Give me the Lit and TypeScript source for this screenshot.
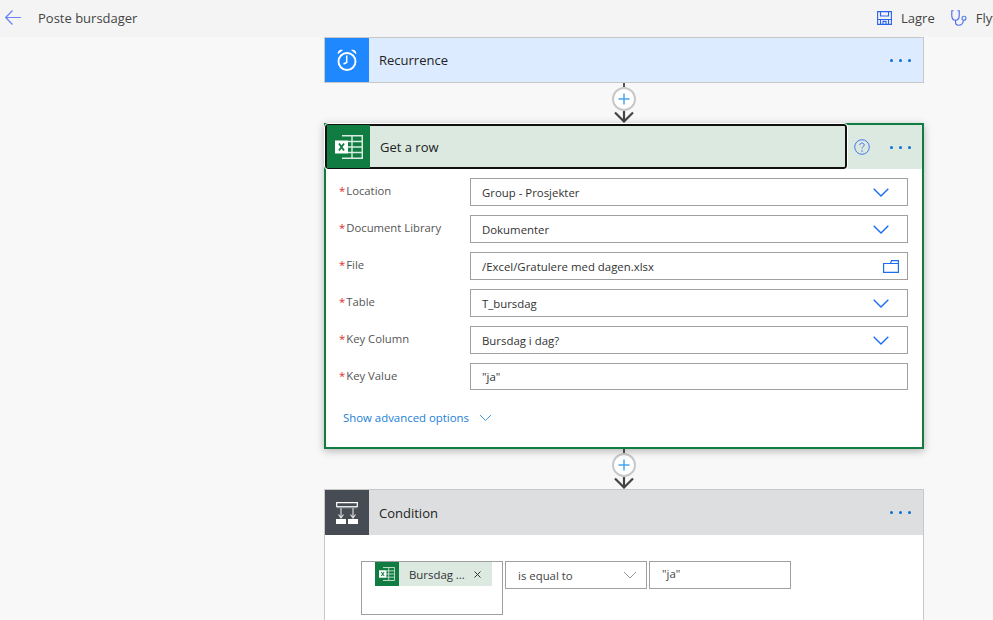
import { LitElement, html, css } from "lit";
import { customElement } from "lit/decorators.js";

const chevron = html`<svg class="chev" width="16" height="9" viewBox="0 0 16 9"><path d="M.7.700 8 8l7.300-7.300" fill="none" stroke="#1a6ff0" stroke-width="1.400"/></svg>`;
const dots = html`<span class="dots"><i></i><i></i><i></i></span>`;
const excel = (w: number, h: number) => html`<svg width="${w}" height="${h}" viewBox="0 0 28 24">
  <path d="M7 .7h20.300v22.600H7" fill="none" stroke="#dcece2" stroke-width="1.500"/>
  <path d="M17 .7v22.600M13 6.500h14.300M13 12h14.300M13 17.500h14.300" fill="none" stroke="#dcece2" stroke-width="1.400"/>
  <rect x="0" y="5.500" width="13" height="13" fill="#fff"/>
  <path d="M4 8.500l5 7M9 8.500l-5 7" stroke="#107c41" stroke-width="1.800" fill="none"/>
</svg>`;

@customElement("flow-connector")
class FlowConnector extends LitElement {
  static styles = css`
    :host { display: flex; flex-direction: column; align-items: center; height: 40px; }
    .line { width: 2px; height: 4px; background: #555; }
    .plus { width: 24px; height: 24px; box-sizing: border-box; border: 2px solid #c8c8c8; border-radius: 50%; background: #fff; display: flex; align-items: center; justify-content: center; }
    svg { display: block; }
  `;
  render() {
    return html`<div class="line"></div>
      <div class="plus"><svg width="12" height="12" viewBox="0 0 12 12"><path d="M6 .5v11M.5 6h11" stroke="#4aa6ee" stroke-width="1.500" fill="none"/></svg></div>
      <svg width="20" height="12" viewBox="0 0 20 12"><path d="M1 1.500 10 10.500l9-9M10 0v10" fill="none" stroke="#444" stroke-width="2.200"/></svg>`;
  }
}

@customElement("app-root")
export class AppRoot extends LitElement {
  static styles = css`
    :host { display: block; width: 993px; height: 620px; overflow: hidden; background: #f8f8f8; font-family: "Open Sans", "Noto Sans", sans-serif; font-size: 12px; color: #333; }
    svg { display: block; flex: none; }
    .top { box-sizing: border-box; height: 37px; padding-bottom: 2px; background: #f4f4f4; display: flex; align-items: center; overflow: hidden; white-space: nowrap; }
    .left { flex: 0 0 877px; display: flex; align-items: center; gap: 17px; padding-left: 5px; box-sizing: border-box; font-size: 13px; color: #444; }
    .cmd { flex: none; display: flex; align-items: center; font-size: 13px; color: #444; }
    .cmd span { margin: 0 16px 0 9px; }
    .col { width: 600px; margin-left: 324px; }
    .card { box-sizing: border-box; background: #fff; }
    .head { display: flex; align-items: center; height: 44px; }
    .ico { width: 44px; align-self: stretch; display: flex; align-items: center; justify-content: center; flex: none; }
    .title { flex: 1; padding-left: 10px; font-size: 13px; color: #222; }
    .dots { display: flex; gap: 6px; padding-right: 12px; }
    .dots i { width: 3px; height: 3px; border-radius: 50%; background: #0a6fd6; }
    .rec { border: 1px solid #c8c8c8; background: #dcebff; height: 46px; }
    .rec .ico { background: #2088ff; }
    .get { border: 2px solid #107c41; height: 326px; box-shadow: 0 2px 8px rgba(0,0,0,.28); position: relative; }
    .get .head { background: #dbe9e1; height: 44px; }
    .get .ico { background: #107c41; width: 43px; }
    .get .dots { padding-right: 11px; }
    .focus { flex: 1; align-self: stretch; display: flex; align-items: center; border: 2px solid #111; border-radius: 3px; margin: -1px 0 0 -1px; outline: 1px solid #fff; }
    .focus .ico { margin: -1px 0; }
    .focus .title { padding-top: 1px; }
    .help { margin: 0 20px 0 7px; }
    .form { display: flex; flex-direction: column; gap: 9px; padding: 9px 14px 0 13px; }
    .row { display: flex; }
    .label { width: 131px; flex: none; font-size: 11.300px; color: #555; line-height: 20px; margin-top: 3px; white-space: nowrap; }
    .label b { color: #e02b2b; font-weight: 400; margin-right: 1px; }
    .input { box-sizing: border-box; flex: 1; height: 28px; border: 1px solid #a0a0a0; background: #fff; display: flex; align-items: center; justify-content: space-between; padding: 0 18px 0 11px; font-size: 11.400px; color: #333; }
    .row.short .input { height: 27px; }
    .row.file .input { padding-right: 8px; }
    .adv { display: flex; align-items: center; gap: 10px; padding: 20px 0 0 17px; font-size: 11.400px; color: #1b80d8; }
    .cond { border: 1px solid #c8c8c8; border-bottom: 0; height: 131px; }
    .cond .head { background: #dddee0; height: 45px; }
    .cond .ico { background: #474b54; }
    .cond .title { padding-top: 1px; }
    .cbody { display: flex; align-items: flex-start; gap: 2px; padding: 26px 0 0 36px; }
    .box { box-sizing: border-box; width: 142px; height: 54px; border: 1px solid #a0a0a0; padding: 0 0 0 13px; }
    .chip { width: 117px; height: 24px; background: #dbe9e1; display: flex; align-items: center; font-size: 11.400px; color: #333; }
    .cico { width: 24px; height: 24px; background: #107c41; display: flex; align-items: center; justify-content: center; flex: none; }
    .txt { flex: 1; padding-left: 10px; white-space: nowrap; }
    .x { margin-right: 11px; }
    .sel, .val { box-sizing: border-box; height: 28px; border: 1px solid #a0a0a0; display: flex; align-items: center; font-size: 11.400px; color: #444; background: #fff; }
    .sel { width: 142px; justify-content: space-between; padding: 0 9px 0 12px; }
    .val { width: 142px; padding: 0 0 3px 12px; }
  `;

  field(label: string, value: string, icon: unknown = chevron, cls = "") {
    return html`<div class="row ${cls}">
      <div class="label"><b>*</b>${label}</div>
      <div class="input"><span>${value}</span>${icon}</div>
    </div>`;
  }

  render() {
    const folder = html`<svg width="16" height="13" viewBox="0 0 16 13"><path d="M.6 3.500h14.800v8.900H.6zM7.500 3.500 8.500.6h6.900v2.900" fill="none" stroke="#1a6ff0" stroke-width="1.200"/></svg>`;
    return html`
      <div class="top">
        <div class="left">
          <svg width="16" height="15" viewBox="0 0 16 15"><path d="M7.500.5.700 7.500l6.800 7M.7 7.500H16" fill="none" stroke="#6a84f5" stroke-width="1.200"/></svg>
          <span>Poste bursdager</span>
        </div>
        <div class="cmd">
          <svg width="15" height="14" viewBox="0 0 15 14"><path d="M.6.600h13.800v12.800H.6zM3.500.6v4.400h8V.6M3.500 13.400V8.500h8v4.900M6 13.400v-3h3v3M.6 8.500h2.900M11.500 8.500h2.900" fill="none" stroke="#2a62f0" stroke-width="1.100"/></svg>
          <span>Lagre</span>
          <svg width="16" height="16" viewBox="0 0 16 16"><path d="M2.500.7H.8v4.800c0 3 1.800 4.700 3.700 4.700S8.200 8.500 8.200 5.500V.7H6.500M4.500 10.200V12c0 2 1.500 3.300 3.300 3.300S11.800 14 12.500 10.500" fill="none" stroke="#4a66f0" stroke-width="1.100"/><circle cx="13" cy="8.300" r="2" fill="none" stroke="#4a78e8" stroke-width="1.100"/></svg>
          <span>Flytkontroll</span>
        </div>
      </div>
      <div class="col">
        <div class="card rec">
          <div class="head">
            <div class="ico"><svg width="20" height="22" viewBox="0 0 20 22"><circle cx="10" cy="12.500" r="8.500" fill="none" stroke="#fff" stroke-width="1.900"/><path d="M9.700 6.500V13.500L6.500 15" fill="none" stroke="#fff" stroke-width="1.500"/><path d="M.8 5.200C.3 2.500 2.800 0 6 1zM19.200 5.200C19.700 2.500 17.200 0 14 1z" fill="#fff"/></svg></div>
            <div class="title">Recurrence</div>
            ${dots}
          </div>
        </div>
        <flow-connector></flow-connector>
        <div class="card get">
          <div class="head">
            <div class="focus">
              <div class="ico">${excel(28, 24)}</div>
              <div class="title">Get a row</div>
            </div>
            <svg class="help" width="16" height="16" viewBox="0 0 16 16"><circle cx="8" cy="8" r="7.300" fill="none" stroke="#4a78f0" stroke-width="1"/><path d="M5.800 6.200c0-1.400 1-2.200 2.200-2.200s2.200.8 2.200 2c0 1.800-2.200 1.800-2.200 3.700" fill="none" stroke="#4a78f0" stroke-width="1"/><circle cx="8" cy="12" r=".8" fill="#4a78f0"/></svg>
            ${dots}
          </div>
          <div class="form">
            ${this.field("Location", "Group - Prosjekter")}
            ${this.field("Document Library", "Dokumenter")}
            ${this.field("File", "/Excel/Gratulere med dagen.xlsx", folder, "file")}
            ${this.field("Table", "T_bursdag")}
            ${this.field("Key Column", "Bursdag i dag?")}
            ${this.field("Key Value", '"ja"', "", "short")}
          </div>
          <div class="adv">Show advanced options
            <svg width="13" height="8" viewBox="0 0 13 8"><path d="M1 1l5.500 5.500L12 1" fill="none" stroke="#4a9be0" stroke-width="1"/></svg>
          </div>
        </div>
        <flow-connector></flow-connector>
        <div class="card cond">
          <div class="head">
            <div class="ico"><svg width="22" height="22" viewBox="0 0 22 22"><path d="M.7.700h20.600v4H.7z" fill="none" stroke="#fff" stroke-width="1.200"/><path d="M5 5v11M17 5v11M2.500 12.500 5 16l2.500-3.500M14.500 12.500 17 16l2.500-3.500" fill="none" stroke="#d8d8d8" stroke-width="1.200"/><path d="M1 5.500h20" stroke="#9a9ca2" stroke-width="1.500"/><rect x="0" y="17" width="10" height="5" fill="#fff"/><rect x="12" y="17" width="10" height="5" fill="#fff"/></svg></div>
            <div class="title">Condition</div>
            ${dots}
          </div>
          <div class="cbody">
            <div class="box">
              <div class="chip">
                <div class="cico">${excel(16, 14)}</div>
                <div class="txt">Bursdag ...</div>
                <svg class="x" width="7" height="7" viewBox="0 0 7 7"><path d="M.5.500l6 6M6.500.500l-6 6" stroke="#333" stroke-width="1"/></svg>
              </div>
            </div>
            <div class="sel"><span>is equal to</span><svg width="14" height="8" viewBox="0 0 14 8"><path d="M1 1l6 6 6-6" fill="none" stroke="#999" stroke-width="1"/></svg></div>
            <div class="val">"ja"</div>
          </div>
        </div>
      </div>
    `;
  }
}
void FlowConnector;
